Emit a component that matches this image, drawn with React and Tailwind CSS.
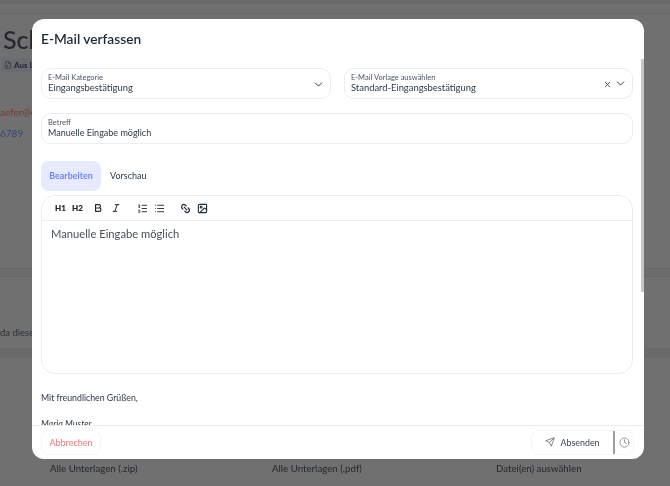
import React from "react";
import { ChevronDown, X, Bold, Italic, ListOrdered, List, Link2, Image, Send, Clock, FileInput } from "lucide-react";

function Field({ label, value, valueSize = "text-[9.4px]", children, className = "" }) {
  return (
    <div className={`h-[31px] rounded-[10px] border border-[#ececec] pl-[6px] pr-[5px] flex items-center justify-between ${className}`}>
      <div className="flex flex-col pb-[1px]">
        <span className="text-[7.5px] leading-[9px] text-[#4b5563]">{label}</span>
        <span className={`${valueSize} leading-[12px] text-[#2f3a44]`}>{value}</span>
      </div>
      {children}
    </div>
  );
}

export default function App() {
  return (
    <div className="relative h-[486px] w-[670px] overflow-hidden bg-[#707070] font-['Lato','Noto_Sans',sans-serif] text-[#2f3a44] blur-[0.3px]">
      {/* page behind the dialog */}
      <div className="flex h-full flex-col">
        <div className="h-[4px] bg-[#6a6a6a]" />
        <div className="h-[9px]" />
        <div className="h-px bg-[#666666]" />
        <div className="pl-[3px] pt-[10px] text-[25px] font-medium leading-[30px] text-[#25292d]">Sch</div>
        <div className="ml-[1px] mt-[4px] flex h-[14px] w-[60px] items-center gap-[2px] bg-[#686b72] pl-[3px] text-[8px] font-bold text-[#23272c]">
          <FileInput size={8} strokeWidth={1.6} />
          <span>Aus Le</span>
        </div>
        <div className="pt-[34px] text-[10px] leading-[12px] text-[#7a3636]">aefer@e</div>
        <div className="pt-[9px] text-[10px] leading-[12px] text-[#39466e]">6789</div>
        <div className="mt-[129px] h-[9px] border-y border-[#666666] bg-[#6c6c6c]" />
        <div className="pt-[50px] text-[9.5px] leading-[12px] text-[#2a2f33]">da diese</div>
        <div className="mt-[9px] h-[10px] bg-[#6a6a6a]" />
        <div className="mt-[104px] flex pl-[50px] text-[9.7px] leading-[12px] text-[#23272c]">
          <span className="w-[222px]">Alle Unterlagen (.zip)</span>
          <span className="w-[224px]">Alle Unterlagen (.pdf)</span>
          <span>Datei(en) auswählen</span>
        </div>
      </div>

      {/* dialog */}
      <div className="absolute left-[32px] top-[19px] flex h-[440px] w-[612px] flex-col overflow-hidden rounded-[12px] bg-white">
        <div className="relative flex-1 overflow-hidden px-[9px]">
          <h2 className="pt-[11px] text-[13.7px] font-semibold leading-[18px] text-[#1f2a33]">E-Mail verfassen</h2>
          <div className="mt-[20px] flex gap-[13px]">
            <Field label="E-Mail Kategorie" value="Eingangsbestätigung" className="w-[290px]">
              <ChevronDown size={13} strokeWidth={1.8} className="mt-[1px]" />
            </Field>
            <Field label="E-Mail Vorlage auswählen" value="Standard-Eingangsbestätigung" className="w-[289px]">
              <div className="flex items-center gap-[2px]">
                <X size={9} strokeWidth={2.2} className="mt-[2px]" />
                <ChevronDown size={13} strokeWidth={1.8} />
              </div>
            </Field>
          </div>
          <Field label="Betreff" value="Manuelle Eingabe möglich" valueSize="text-[9px]" className="mt-[14px] w-[592px]" />

          <div className="mt-[17px] flex items-center">
            <div className="flex h-[30px] w-[60px] items-center justify-center rounded-[8px] bg-[#e6eafd] text-[8.9px] font-bold text-[#6f86f2]">Bearbeiten</div>
            <div className="pl-[9px] text-[9px] text-[#2f3a44]">Vorschau</div>
          </div>

          <div className="mt-[4px] flex h-[179px] w-[592px] flex-col rounded-[14px] border border-[#ececec]">
            <div className="flex h-[25px] items-center border-b border-[#ececec] pl-[13px] text-[#1f2a33]">
              <span className="w-[17px] text-[8px] font-extrabold">H1</span>
              <span className="w-[21px] text-[8px] font-extrabold">H2</span>
              <Bold size={10} strokeWidth={2.8} />
              <Italic size={10} strokeWidth={2.4} className="ml-[8px]" />
              <ListOrdered size={11} strokeWidth={2} className="ml-[16px]" />
              <List size={11} strokeWidth={2} className="ml-[6px]" />
              <Link2 size={11} strokeWidth={2.6} className="ml-[15px] rotate-45" />
              <Image size={11} strokeWidth={2.4} className="ml-[6px]" />
            </div>
            <p className="pl-[9px] pt-[5px] text-[11.2px] leading-[16px] text-[#4b5157]">Manuelle Eingabe möglich</p>
          </div>

          <p className="mt-[18px] text-[8.75px] leading-[12px] text-[#2f3a44]">Mit freundlichen Grüßen,</p>
          <p className="mt-[14px] text-[9px] italic leading-[12px] text-[#2f3a44]">Maria Muster</p>

          <div className="absolute right-0 top-[40px] h-[233px] w-[3px] bg-[#c6c6ca]" />
        </div>

        <div className="flex h-[34px] shrink-0 items-center justify-between border-t border-[#ececec] pl-[9px] pr-[10px]">
          <div className="flex h-[25px] w-[60px] items-center justify-center rounded-[8px] border border-[#f6f6f6] text-[9px] text-[#f57575]">Abbrechen</div>
          <div className="flex h-[25px] w-[103px] items-center rounded-[8px] border border-[#f6f6f6]">
            <div className="flex flex-1 items-center justify-center gap-[5px] text-[8.9px] text-[#3d464e]">
              <Send size={10} strokeWidth={1.5} />
              <span>Absenden</span>
            </div>
            <div className="h-full w-[2px] bg-[#9a9ea3]" />
            <div className="flex w-[18px] justify-center pl-[1px] text-[#6b7278]">
              <Clock size={11} strokeWidth={1.5} />
            </div>
          </div>
        </div>
      </div>
    </div>
  );
}
